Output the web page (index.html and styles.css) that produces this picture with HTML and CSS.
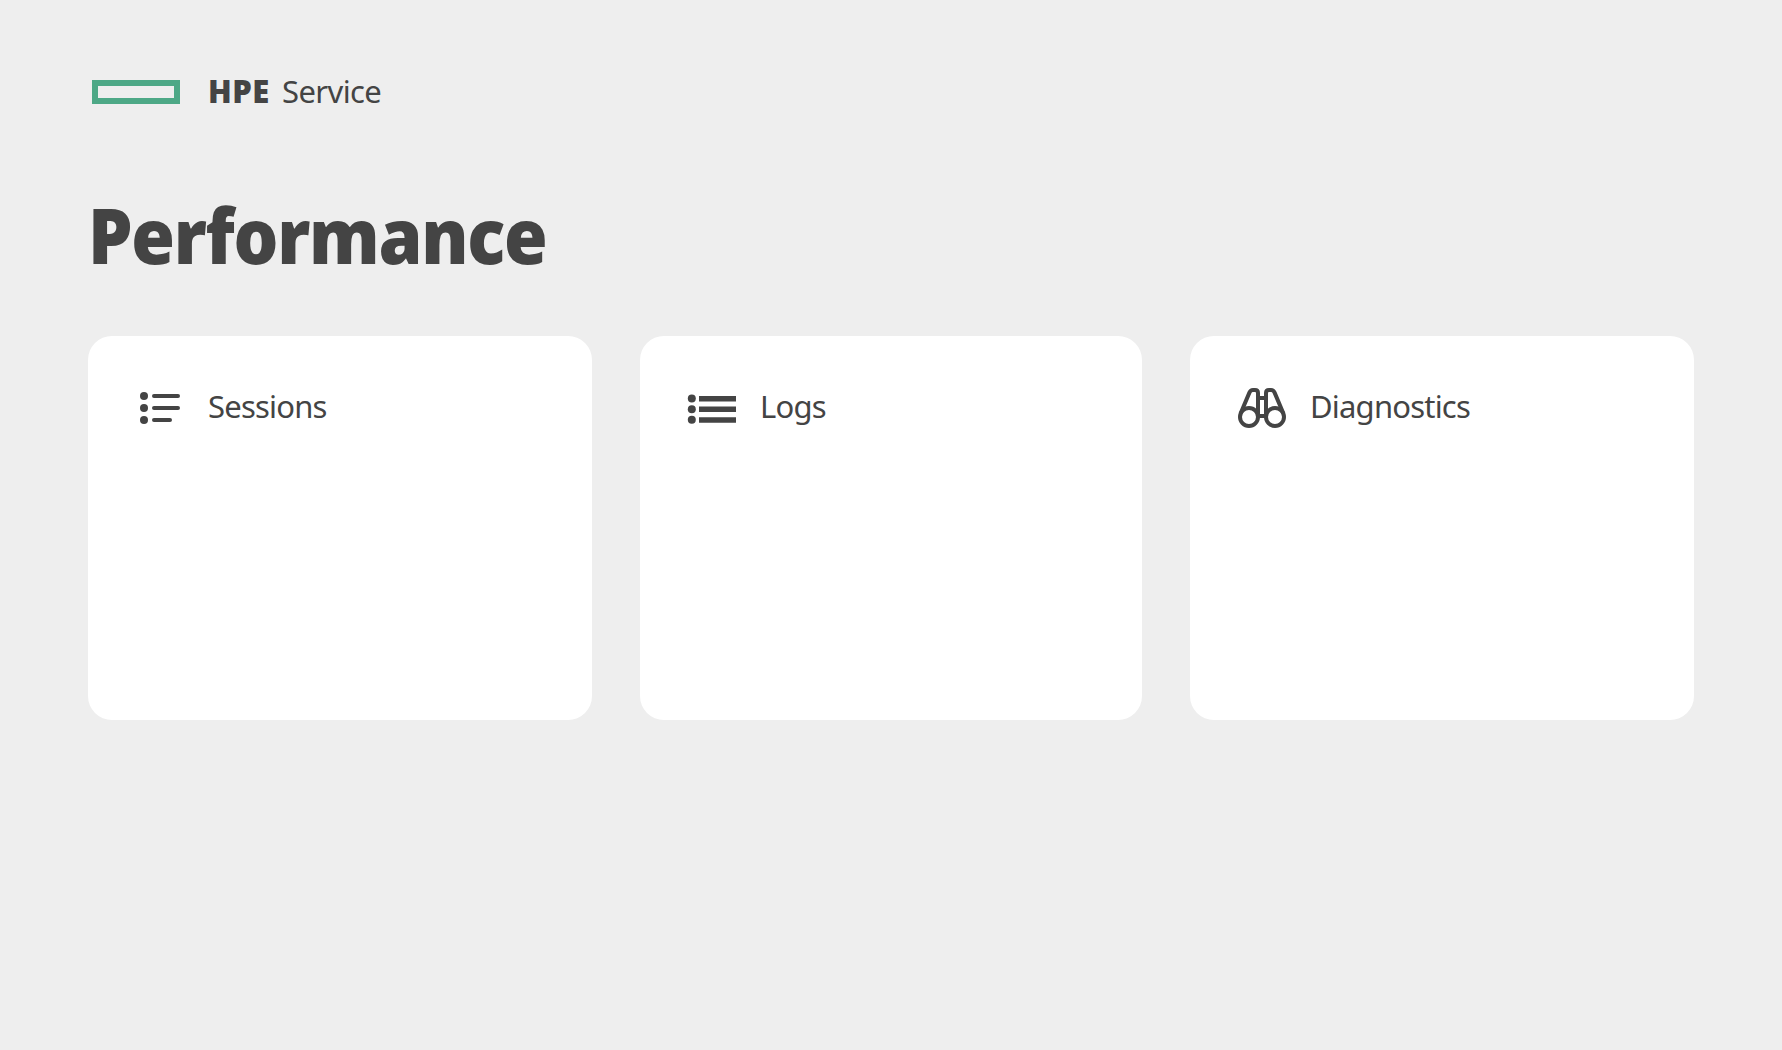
FILE: index.html
```html
<!DOCTYPE html>
<html lang="en">
<head>
<meta charset="utf-8">
<title>HPE Service</title>
<link rel="stylesheet" href="styles.css">
</head>
<body>
<header class="brand">
  <div class="brand-mark"></div>
  <div class="brand-name"><strong>HPE</strong><span>Service</span></div>
</header>
<main>
  <h1>Performance</h1>
  <div class="cards">
    <section class="card">
      <svg class="icon" viewBox="0 0 48 48" width="48" height="48">
        <g fill="#444"><circle cx="8" cy="12" r="4"/><circle cx="8" cy="24" r="4"/><circle cx="8" cy="36" r="4"/></g>
        <path d="M18 12H42M18 24H42M18 36H34" stroke="#444" stroke-width="4" stroke-linecap="round"/>
      </svg>
      <h2 class="sessions">Sessions</h2>
    </section>
    <section class="card">
      <svg class="icon" viewBox="0 0 48 48" width="48" height="48">
        <g fill="#444"><circle cx="3.8" cy="14.6" r="4"/><circle cx="3.8" cy="25.2" r="4"/><circle cx="3.8" cy="35.8" r="4"/></g>
        <path d="M11 14.7H48M11 25.3H48M11 35.9H48" stroke="#444" stroke-width="5.5"/>
      </svg>
      <h2 class="logs">Logs</h2>
    </section>
    <section class="card">
      <svg class="icon" viewBox="0 0 48 48" width="48" height="48" fill="none" stroke="#444" stroke-width="4">
        <circle cx="11" cy="33" r="9"/><circle cx="37" cy="33" r="9"/>
        <path d="M2.6 29.5L11.4 8.6Q12.5 6 15 6H17Q20 6 20 9V33M45.4 29.5L36.6 8.6Q35.5 6 33 6H31Q28 6 28 9V33M20 14H28M20 32H28"/>
      </svg>
      <h2 class="diagnostics">Diagnostics</h2>
    </section>
  </div>
</main>
</body>
</html>
```
FILE: styles.css
```css
* { box-sizing: border-box; }
body {
  margin: 0;
  padding: 72px 88px;
  min-height: 1050px;
  background: #eee;
  color: #444;
  font-family: "Noto Sans", "Open Sans", sans-serif;
  font-size: 31px;
}
.brand {
  display: flex;
  align-items: center;
  height: 40px;
  padding-left: 4px;
  gap: 28px;
}
.brand-mark { width: 88px; height: 24px; border: 6px solid #4da886; }
.brand-name { display: flex; line-height: 38px; padding-bottom: 3px; }
.brand-name strong {
  width: 74px;
  font-family: "Open Sans", sans-serif;
  font-weight: 800;
  letter-spacing: 0.4px;
}
.brand-name span { letter-spacing: -0.6px; }
h1 {
  margin: 73px 0 51px;
  height: 100px;
  line-height: 100px;
  font-family: "Open Sans", sans-serif;
  font-size: 76px;
  font-weight: 800;
  letter-spacing: -1.4px;
  transform: scaleX(0.93);
  transform-origin: left;
}
.cards {
  display: grid;
  grid-template-columns: 504fr 502fr 504fr;
  gap: 48px;
}
.card {
  display: flex;
  align-items: flex-start;
  gap: 24px;
  height: 384px;
  padding: 48px;
  border-radius: 24px;
  background: #fff;
}
.icon { flex: none; overflow: visible; }
h2 {
  margin: 0;
  line-height: 45px;
  font-size: 31px;
  font-weight: 400;
  letter-spacing: -0.8px;
}
```
